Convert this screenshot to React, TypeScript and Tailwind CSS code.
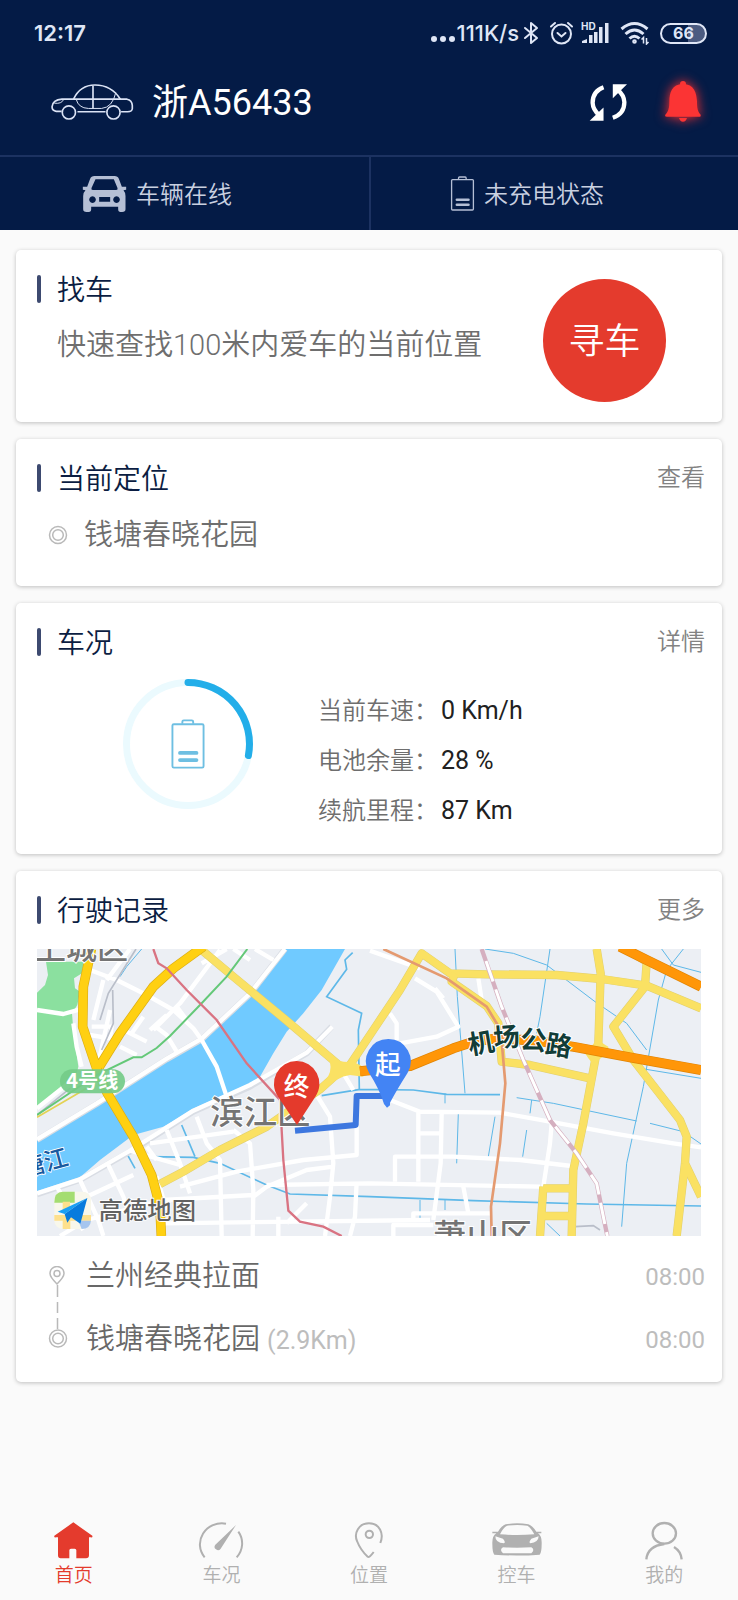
import React from "react";

const CJK = "font-['Roboto','Noto_Sans_CJK_SC',sans-serif]";

function StatusBar() {
  return (
    <div className="flex h-[66px] items-center justify-between pl-[34px] pr-[31px] font-['Inter','Noto_Sans',sans-serif] text-[22px] font-semibold text-[#dfe6f6]">
      <span>12:17</span>
      <div className="flex items-center">
        <svg className="h-[22px] w-[25px]" viewBox="0 0 25 22" fill="currentColor" aria-hidden="true">
          <circle cx="3" cy="17" r="3" /><circle cx="12" cy="17" r="3" /><circle cx="21" cy="17" r="3" />
        </svg>
        <span className="ml-px font-medium">111K/s</span>
        <svg className="ml-1 h-[24px] w-[16px]" viewBox="0 0 16 24" fill="none" stroke="currentColor" strokeWidth="2" strokeLinejoin="round" strokeLinecap="round" aria-hidden="true">
          <path d="M2 7 14 17 8 22V2l6 5L2 17" />
        </svg>
        <svg className="ml-2.5 h-[24px] w-[25px]" viewBox="0 0 25 24" fill="none" stroke="currentColor" strokeWidth="2" strokeLinecap="round" aria-hidden="true">
          <circle cx="12.500" cy="13" r="9.500" /><path d="m8.500 12 4 3.500 4-3.500M2 5.500 6 2M23 5.500 19 2" />
        </svg>
        <svg className="ml-1.5 h-[24px] w-[30px] overflow-visible" viewBox="0 0 30 24" fill="currentColor" aria-hidden="true">
          <text x="1" y="9" fontSize="10" fontWeight="700">HD</text>
          <path d="M2 22v-2l5-2v4zM9 14h3.500v8H9zM14 11h3.500v11H14zM19 6h3.500v16H19zM25 2h3.500v20H25z" />
        </svg>
        <svg className="ml-2.5 h-[24px] w-[30px]" viewBox="0 0 30 24" fill="none" stroke="currentColor" strokeWidth="3" aria-hidden="true">
          <path d="M1.500 8Q14.500-3 27.500 8M5.500 13q9-8 18 0M9.500 17.500q5-4.500 10 0" />
          <circle cx="14.500" cy="20.500" r="1.300" strokeWidth="2" />
          <path strokeWidth="1.500" d="M23.500 22.500v-6l-2 2M26.500 17v6l2-2" />
        </svg>
        <span className="ml-2.5 flex h-[21px] w-[47px] items-center justify-center rounded-full border-2 border-[#dfe6f6] bg-linear-to-r from-[#041b46] from-60% to-[#4b5b81] to-60% text-[16px] font-bold leading-none">66</span>
      </div>
    </div>
  );
}

function SedanIcon() {
  return (
    <svg className="h-[37px] w-[84px]" viewBox="150 247 252 112" fill="none" stroke="#dbe3f5" strokeWidth="5" aria-hidden="true">
      <path d="M184 330H168Q155 328 155 316 157 295 185 293H382Q397 296 398 312V322Q397 331 384 331H364M232 331H317" />
      <circle cx="206" cy="333" r="20" /><circle cx="341" cy="333" r="20" />
      <path d="M220 293Q240 250 285 250 335 250 362 293M279 250V321" />
      <path strokeWidth="3" d="M228 293Q235 320 265 321H305Q338 318 348 273M162 305Q184 308 190 294" />
    </svg>
  );
}

function CarFrontIcon() {
  return (
    <svg className="h-[38px] w-[45px]" viewBox="246 522 134 114" fill="#b5bfd5" fillRule="evenodd" aria-hidden="true">
      <path d="M283 525H343Q353 525 356 533L365 557H378V566L370 568Q376 575 376 585V625Q376 633 366 633H361Q354 633 354 625V617H273V625Q273 633 266 633H259Q249 633 249 625V585Q249 575 256 568L248 566V557H261L270 533Q273 525 283 525ZM286 535 274 561Q272 567 278 567H348Q354 567 352 561L341 535ZM277 586a10 10 0 1 0 .1 0ZM349 586a10 10 0 1 0 .1 0ZM297 588V602H330V588Z" />
    </svg>
  );
}

function BatteryIcon({ className }: { className: string }) {
  return (
    <svg className={className} viewBox="244 526 74 106" fill="none" stroke="currentColor" aria-hidden="true">
      <rect x="248" y="537" width="66" height="92" rx="3" strokeWidth="4" />
      <path d="M269 536V532Q269 529 272 529H289Q292 529 292 532V536" strokeWidth="4" />
      <path d="M264 598H299M264 613H299" strokeWidth="8" strokeLinecap="round" />
    </svg>
  );
}

function Header() {
  return (
    <header className="bg-[#041b46] text-white">
      <StatusBar />
      <div className="flex h-[72px] items-center pl-[50px] pr-[31px]">
        <SedanIcon />
        <h1 className="ml-[18px] pt-0.5 text-[36px] leading-[48px]">浙A56433</h1>
        <button type="button" aria-label="刷新" className="ml-auto">
          <svg className="h-[39px] w-[39px]" viewBox="660 244 118 116" fill="none" stroke="white" strokeWidth="13">
            <path d="M704 256Q671 268 671 303 672 324 691 340M732 348Q767 336 767 301 766 280 747 264" />
            <path fill="white" stroke="none" d="M662 357H704V317ZM775 247H732V289Z" />
          </svg>
        </button>
        <button type="button" aria-label="消息提醒" className="ml-[31px]">
          <svg className="h-[48px] w-[48px] overflow-visible drop-shadow-[0_0_6px_#ff3030]" viewBox="869 230 144 144" fill="#fb3434">
            <circle cx="941" cy="248" r="9" />
            <path d="M941 247C907 250 901 272 900 300 900 322 897 330 889 339 886 344 887 346 892 346H991Q996 346 993 339C985 330 983 322 983 300 981 272 975 250 941 247ZM929 350H953Q950 361 941 361 932 361 929 350Z" />
          </svg>
        </button>
      </div>
      <div className="mt-[17px] grid grid-cols-2 border-t-2 border-[#1c3261] text-[24px] font-[350] text-[#c9d0e0]">
        <div className="flex h-[73px] items-center pl-[82px]">
          <CarFrontIcon /><span className="ml-[9px] pt-0.5">车辆在线</span>
        </div>
        <div className="flex h-[73px] items-center border-l-2 border-[#1c3261] pl-[79px]">
          <BatteryIcon className="h-[35px] w-[25px] text-[#b5bfd5]" /><span className="ml-[9px] pt-0.5">未充电状态</span>
        </div>
      </div>
    </header>
  );
}

function Card({ children, className = "" }: { children: React.ReactNode; className?: string }) {
  return <section className={`rounded-[5px] bg-white pt-[19px] shadow-[0_1px_4px_rgba(0,0,0,0.24)] ${className}`}>{children}</section>;
}

function CardTitle({ title, action }: { title: string; action?: string }) {
  return (
    <div className="flex h-10 items-center pl-[21px] pr-[17px]">
      <span className="h-7 w-1 rounded-full bg-[#3d4a70]" />
      <h2 className="ml-4 pt-1 text-[28px] leading-10 text-[#0b1d42]">{title}</h2>
      {action && <a href="#" className="ml-auto text-[24px] leading-9 text-[#828282]">{action}</a>}
    </div>
  );
}

function Gauge() {
  return (
    <div className="relative flex h-[132px] w-[132px] items-center justify-center">
      <svg className="absolute inset-0" viewBox="0 0 132 132" fill="none" strokeWidth="7" aria-hidden="true">
        <circle cx="66" cy="66" r="61.500" stroke="#ebfafe" />
        <path d="M66 4.500A61.500 61.500 0 0 1 126.400 77.500" stroke="#23aee9" strokeLinecap="round" />
      </svg>
      <BatteryIcon className="h-[50px] w-[36px] text-[#6ebfe2]" />
    </div>
  );
}

function RouteMap() {
  return (
    <svg className="mx-[21px] mt-[19px] block h-auto w-[calc(100%-42px)] font-['Noto_Sans_CJK_SC',sans-serif]" viewBox="51 57 1992 861" fill="none" role="img" aria-label="行驶路线地图">
      <rect x="51" y="57" width="1992" height="861" fill="#eceff4" />
      <path fill="#8be09f" d="M78 95H192L186 130 162 145 165 175 180 185 172 225 156 250 160 300 175 410 165 450 51 530V188L75 165 84 135Z" />
      <path fill="#70caff" d="M790 57H975L905 180 850 250 800 305 760 370 720 440 690 460 600 508 520 540 430 590 340 615 240 690 180 742 120 768 51 785V625L180 560 260 510 300 475 400 410 540 340 590 290 700 180Z" />
      <g stroke="#5eb8e8" strokeWidth="4">
        <path d="M998 68 975 90 980 118 920 200 1025 250 1015 300 1018 480M905 497 1020 478 1180 480 1280 493 1440 494M485 585 525 680M320 670 345 715M390 680 520 682 600 700 740 765 810 792 1050 800 1360 812 1700 822 2043 828" strokeWidth="5" />
        <path d="M365 57 320 110 300 140M1395 57 1480 70 1580 105 1725 215 1820 280 1880 360M1925 57 1960 105 2043 127M1990 57 1940 120 1915 210 1870 470 1820 700 1805 890M1305 57 1312 200 1335 490M1590 57 1560 260 1550 310M1490 503 1600 520 1850 573M1890 580 1990 605 2043 642M1425 560 1405 680M1535 510 1530 550M1315 550 1310 700M1275 490V520M1200 810V870M1275 808V840M1860 415 2043 445M1580 880 1620 918M1520 600 1508 680" strokeWidth="3" />
      </g>
      <g stroke="#d9dde4" strokeWidth="18" strokeLinejoin="round">
        <path d="M51 630 230 522 440 388 545 328 690 192 795 57M51 793 180 750 330 665 520 545 690 470 860 370 935 290" />
      </g>
      <g stroke="#fff" strokeWidth="13" strokeLinejoin="round">
        <path d="M51 628 230 520 440 386 545 326 690 190 795 57M51 790 180 748 330 662 520 542 690 465 860 368 937 290" />
        <path d="M51 240 130 252 180 238M160 280 170 350 185 410M51 535 170 440M210 120 290 150 380 195 460 240 520 295 545 330 590 410 620 500M250 150 220 270M330 57 260 150M270 240 235 400M215 290 275 290 270 325 210 315M300 350 350 375M320 305 380 335M370 260 335 310M400 285 440 315 470 365M440 255 390 300M470 230 500 270M600 60 480 220 400 300M545 100 620 57M640 57 690 90M705 57 760 90" />
        <path d="M110 770 190 900M180 750 235 870 250 918M265 705 310 800 330 860M380 650 410 690M410 740 440 840M440 600 480 700 510 790M530 560 560 640 600 690 605 918M640 600 690 640 700 780 698 918M330 662 480 705M390 640 640 605M200 800 340 735M120 918 200 870 430 810 700 795M480 770 650 725 850 690 1010 675 1010 590M700 800 740 770 860 720 940 710M740 765 1050 760 1560 770M430 880 1230 870M890 495 930 560 940 700 930 800 915 918M1010 755 1005 860 990 918M775 860V918M860 820 800 880" />
        <path d="M1000 480 970 430M1110 510 1200 545 1440 548 1590 575 1780 610 1960 640 2043 652M1195 545V755M1265 550 1262 700 1240 870M1200 610H1265M1125 755V680H1300L1500 690 1655 708M1595 580 1590 640 1570 770M1180 870V850H1410M1330 770 1345 850M1120 918V885H1240M1185 145 1250 185 1315 290 1250 320 1140 340M1245 175 1270 205M1375 145 1385 210M1110 250 1130 280V330M1050 62 1200 115" />
      </g>
      <path stroke="#b9bec9" strokeWidth="5" d="M348 57 265 190 240 270M278 180 280 280 245 360M51 555 150 475M1665 890 1720 887 1740 900" />
      <g strokeLinejoin="round">
        <g stroke="#e0cf70" strokeWidth="25">
          <path d="M545 60 640 140 800 272 965 412M985 412 1060 300 1140 180 1205 70 1290 130 1400 133 1610 135 1745 147 1880 167 2043 235M965 420 900 478 740 590 600 660 490 725 420 762" />
          <path d="M1730 57 1742 130 1735 340 1690 580 1660 720 1655 918M1880 95 1875 170 1780 290 1840 390 1980 570 2000 620 1995 700 1970 918M1995 700 2043 800M1305 130 1295 155 1400 228 1435 280 1445 395 1530 405 1710 445M1570 770 1560 918M1570 775H1655M1565 858H1655M1810 50 1880 95" />
        </g>
        <g stroke="#fae163" strokeWidth="22">
          <path d="M545 60 640 140 800 272 965 412M985 412 1060 300 1140 180 1205 70 1290 130 1400 133 1610 135 1745 147 1880 167 2043 235M965 420 900 478 740 590 600 660 490 725 420 762" />
          <path d="M1730 57 1742 130 1735 340 1690 580 1660 720 1655 918M1880 95 1875 170 1780 290 1840 390 1980 570 2000 620 1995 700 1970 918M1995 700 2043 800M1305 130 1295 155 1400 228 1435 280 1445 395 1530 405 1710 445M1570 770 1560 918M1570 775H1655M1565 858H1655M1810 50 1880 95" />
        </g>
        <path fill="#fae163" d="M925 380Q965 400 1000 395L1030 410V440L990 435Q950 440 915 480L905 460Q945 430 925 380ZM1735 310Q1738 340 1765 350V375Q1735 380 1725 410L1705 385 1695 370Q1725 345 1735 310Z" />
        <g stroke="#dcae16" strokeWidth="29"><path d="M214 57 190 170 188 290 230 415 262 490 340 620 395 735 420 830 424 918M238 410 300 310 400 170 460 115 550 50" /></g>
        <g stroke="#ffd012" strokeWidth="25"><path d="M214 57 190 170 188 290 230 415 262 490 340 620 395 735 420 830 424 918M238 410 300 310 400 170 460 115 550 50" /></g>
        <path stroke="#e08404" strokeWidth="30" d="M1020 424 1170 408 1300 355 1360 335 1430 325 1550 332 1670 352 1830 382 2043 420M1800 50 1880 90 2043 170" />
        <path stroke="#ff9608" strokeWidth="26" d="M1020 424 1170 408 1300 355 1360 335 1430 325 1550 332 1670 352 1830 382 2043 420M1800 50 1880 90 2043 170" />
      </g>
      <path stroke="#d5afbf" strokeWidth="13" d="M1385 57 1445 230 1510 390 1590 570 1670 670 1730 760 1750 860 1762 918" />
      <path stroke="#fff" strokeWidth="9" strokeDasharray="65 25" d="M1398 93 1445 230 1510 390 1590 570 1670 670 1730 760 1750 860 1762 918" />
      <path stroke="#e49a70" strokeWidth="8" d="M1090 57 1280 145 1400 230 1442 300 1456 460 1440 640 1413 830 1415 918" />
      <path stroke="#64c878" strokeWidth="6" d="M51 555 230 435 340 382 365 382 410 354 450 318 540 225 620 140 682 57" />
      <path stroke="#e3d254" strokeWidth="5" d="M51 562 140 510 200 475" />
      <path stroke="#d97382" strokeWidth="7" d="M400 57 415 100 440 115 500 180 590 270 680 400 780 510 790 690 805 842 840 875 910 890 965 918" />
      <rect x="120" y="418" width="195" height="72" rx="36" fill="#74cb88" fillOpacity=".92" />
      <text x="139" y="474" fill="#fff" fontSize="60" fontWeight="700">4号线</text>
      <g fill="#747474" stroke="#fff" strokeWidth="6" paintOrder="stroke" fontWeight="500">
        <text x="45" y="88" fontSize="93">上城区</text>
        <text x="571" y="583" fontSize="100">滨江区</text>
        <text x="1240" y="953" fontSize="99">萧山区</text>
      </g>
      <g fill="#123d38" stroke="#fff" strokeWidth="6" paintOrder="stroke" fontWeight="700" fontSize="79">
        <text transform="rotate(-10 1383 340)" x="1344" y="368">机</text>
        <text transform="rotate(-5 1460 320)" x="1420" y="350">场</text>
        <text transform="rotate(5 1540 330)" x="1501" y="359">公</text>
        <text transform="rotate(9 1618 345)" x="1577" y="375">路</text>
      </g>
      <text transform="rotate(-15 80 695)" x="0" y="722" fill="#195aa0" stroke="#fff" strokeWidth="5" paintOrder="stroke" fontSize="72" fontWeight="500">塘江</text>
      <path stroke="#3d77df" strokeWidth="18" strokeLinejoin="round" d="M825 602 1007 585 1010 498H1105" />
      <path fill="#4384f4" d="M1105 327A67 67 0 0 1 1163 428Q1130 480 1110 518V526L1101 533 1092 522Q1080 480 1047 428A67 67 0 0 1 1105 327Z" />
      <path fill="#e43a2c" d="M830 393A68 68 0 0 1 886 500L831 585 774 500A68 68 0 0 1 830 393Z" />
      <g fill="#fff" fontSize="77" fontWeight="500">
        <text x="1065" y="432">起</text><text x="791" y="499">终</text>
      </g>
      <rect x="103" y="785" width="110" height="112" rx="25" fill="#f8f7eb" />
      <path fill="#a4dd71" d="M128 785H164V818H103Q103 785 128 785Z" />
      <path fill="#fee08c" d="M128 815H150V840H128ZM103 855H213V872H151V897H128V872H103Z" />
      <path fill="#a6c5ee" d="M175 872H213Q211 897 185 897Z" />
      <path fill="#1aa0f5" d="M202 804 113 845 134 852Z" /><path fill="#087bdd" d="M202 804 181 881 153 862 142 878 134 852Z" />
      <text x="236" y="867" fill="#626262" stroke="#fff" strokeWidth="5" paintOrder="stroke" fontSize="73" fontWeight="500">高德地图</text>
    </svg>
  );
}

function TargetIcon() {
  return (
    <svg className="h-5 w-5" viewBox="0 0 20 20" fill="none" stroke="#b9b9b9" strokeWidth="1.500" aria-hidden="true">
      <circle cx="10" cy="10" r="8.500" /><circle cx="10" cy="10" r="5.300" />
    </svg>
  );
}

const stats = [
  ["当前车速：", "0 Km/h"],
  ["电池余量：", "28 %"],
  ["续航里程：", "87 Km"],
];

const navItems = [
  {
    label: "首页",
    icon: (
      <svg className="h-[40px] w-[50px]" viewBox="147 62 150 120" fill="currentColor" aria-hidden="true">
        <path d="M220 66 277 106Q279 112 272 111H267V165Q267 174 258 174H229V150Q229 145 224 145H213Q208 145 208 150V174H182Q174 174 174 165V111H168Q161 112 163 106Z" />
      </svg>
    ),
  },
  {
    label: "车况",
    icon: (
      <svg className="h-[40px] w-[50px]" viewBox="590 62 150 120" fill="none" stroke="currentColor" strokeWidth="6" aria-hidden="true">
        <path d="M616 171A66 63 0 0 1 680 70M717 94A66 63 0 0 1 712 171" />
        <path fill="currentColor" stroke="none" d="M710 74 648 133A10 10 0 1 0 664 145Z" />
      </svg>
    ),
  },
  {
    label: "位置",
    icon: (
      <svg className="h-[40px] w-[50px]" viewBox="1032 62 150 120" fill="none" stroke="currentColor" strokeWidth="6" aria-hidden="true">
        <path d="M1141 128C1153 98 1138 69 1107 69 1076 69 1061 98 1071 122 1078 140 1090 157 1103 169Q1108 173 1121 155" />
        <circle cx="1108" cy="102" r="11" />
      </svg>
    ),
  },
  {
    label: "控车",
    icon: (
      <svg className="h-[40px] w-[50px]" viewBox="369 62 150 120" fill="currentColor" fillRule="evenodd" aria-hidden="true">
        <path d="M410 72Q444 66 478 72 490 76 502 94H517V99H507Q519 107 518 130 518 156 512 163 444 168 376 163 370 156 370 130 369 107 382 99H370V94H387Q398 76 410 72ZM414 76Q402 82 393 102 444 106 496 102 486 82 475 76 444 72 414 76ZM379 108Q379 128 405 129 411 126 402 115ZM509 108 487 115Q478 126 484 129 508 127 509 108ZM402 141Q390 148 402 159H487Q499 148 487 141Q444 143 402 141Z" />
      </svg>
    ),
  },
  {
    label: "我的",
    icon: (
      <svg className="h-[40px] w-[50px]" viewBox="812 62 150 120" fill="none" stroke="currentColor" strokeWidth="7" aria-hidden="true">
        <ellipse cx="888" cy="99" rx="35" ry="31" />
        <path d="M834 177Q838 137 888 131M917 140Q938 153 940 177" />
      </svg>
    ),
  },
];

export default function App() {
  return (
    <div className={`flex min-h-screen flex-col bg-[#fafafa] ${CJK}`}>
      <Header />
      <main className="flex flex-col gap-[17px] px-4 pt-5 font-[350]">
        <Card className="flex justify-between pb-5 pr-[56px]">
          <div>
            <CardTitle title="找车" />
            <p className="mt-4 pl-[41px] text-[29px] leading-10 text-[#6e6e6e]">快速查找100米内爱车的当前位置</p>
          </div>
          <button type="button" className="mt-[10px] size-[123px] shrink-0 rounded-full bg-[#e43b2d] pt-0.5 text-[36px] text-white">寻车</button>
        </Card>

        <Card className="pb-[31px]">
          <CardTitle title="当前定位" action="查看" />
          <div className="mt-[17px] flex h-10 items-center pl-[32px]">
            <TargetIcon />
            <span className="ml-4 text-[29px] leading-10 text-[#6e6e6e]">钱塘春晓花园</span>
          </div>
        </Card>

        <Card className="pb-[18px]">
          <CardTitle title="车况" action="详情" />
          <div className="mt-4 flex items-start pl-[106px]">
            <Gauge />
            <dl className="ml-[64px] mt-2">
              {stats.map(([name, value]) => (
                <div key={name} className="flex h-[50px] items-center text-[24px]">
                  <dt className="text-[#6e6e6e]">{name}</dt>
                  <dd className="ml-[3px] text-[25px] font-normal text-[#212121]">{value}</dd>
                </div>
              ))}
            </dl>
          </div>
        </Card>

        <Card className="pb-[11px]">
          <CardTitle title="行驶记录" action="更多" />
          <RouteMap />
          <div className="mt-[9px] flex items-center pl-[32px] pr-[17px]">
            <svg className="h-[84px] w-5 shrink-0" viewBox="0 1 20 84" fill="none" stroke="#b9b9b9" strokeWidth="1.500" aria-hidden="true">
              <path d="M9 19Q2 12 2 8.500A7 7 0 0 1 16 8.500Q16 12 9 19Z" /><circle cx="9" cy="8.500" r="3" />
              <path d="M9.500 20v12M9.500 37v11M9.500 53v11" />
              <circle cx="10" cy="73.500" r="8.500" /><circle cx="10" cy="73.500" r="5.300" />
            </svg>
            <ul className="ml-[18px] grow text-[29px] text-[#686868]">
              <li className="flex h-[63px] items-center justify-between">
                <span>兰州经典拉面</span><time className="text-[24px] font-normal text-[#bdbdbd]">08:00</time>
              </li>
              <li className="flex h-[63px] items-center justify-between">
                <span>钱塘春晓花园 <span className="text-[25px] font-normal text-[#bdbdbd]">(2.9Km)</span></span>
                <time className="text-[24px] font-normal text-[#bdbdbd]">08:00</time>
              </li>
            </ul>
          </div>
        </Card>
      </main>

      <nav className="mt-auto grid grid-cols-5 pb-[9px] pt-6 font-[350]">
        {navItems.map(({ label, icon }, i) => (
          <a key={label} href="#" className={`flex flex-col items-center text-[19px] leading-[30px] ${i === 0 ? "text-[#e43b2d]" : "text-[#b0b0b0]"}`}>
            {icon}
            {label}
          </a>
        ))}
      </nav>
    </div>
  );
}
